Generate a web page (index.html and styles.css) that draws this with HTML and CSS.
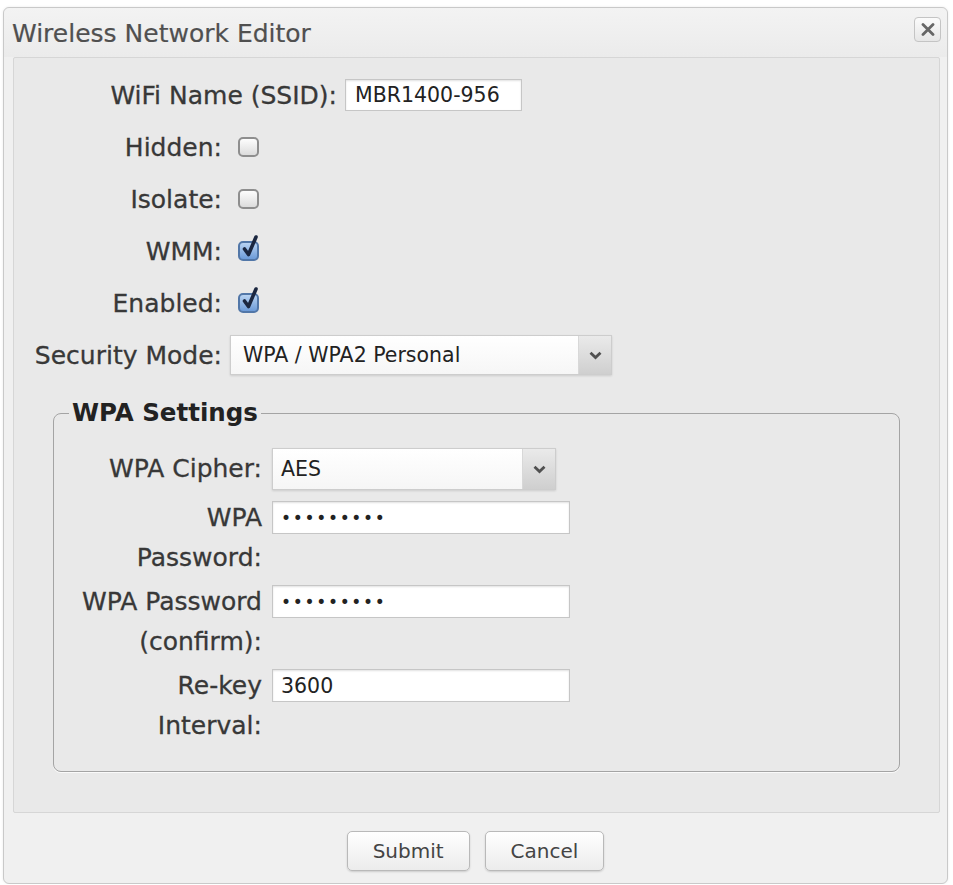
FILE: index.html
```html
<!DOCTYPE html>
<html lang="en">
<head>
<meta charset="utf-8">
<title>Wireless Network Editor</title>
<link rel="stylesheet" href="styles.css">
</head>
<body>
<div class="dialog">
  <div class="titlebar">
    <span class="title">Wireless Network Editor</span>
    <button class="close" aria-label="Close">
      <svg width="14" height="13" viewBox="0 0 14 13"><path d="M2 1.5 L12 11.5 M12 1.5 L2 11.5" stroke="#666" stroke-width="2.8" stroke-linecap="round" fill="none"/></svg>
    </button>
  </div>

  <div class="panel">
    <div class="row">
      <label class="lbl lbl-ssid">WiFi Name (SSID):</label>
      <input class="txt ssid" type="text" value="MBR1400-956">
    </div>
    <div class="row">
      <label class="lbl">Hidden:</label>
      <span class="cb"></span>
    </div>
    <div class="row">
      <label class="lbl">Isolate:</label>
      <span class="cb"></span>
    </div>
    <div class="row">
      <label class="lbl">WMM:</label>
      <span class="cb cb-on"><svg class="tick" width="20" height="26" viewBox="0 0 20 26"><path d="M4.5 15 L8.5 20.5 L16 3" stroke="#1b2740" stroke-width="3.6" stroke-linecap="round" stroke-linejoin="round" fill="none"/></svg></span>
    </div>
    <div class="row">
      <label class="lbl">Enabled:</label>
      <span class="cb cb-on"><svg class="tick" width="20" height="26" viewBox="0 0 20 26"><path d="M4.5 15 L8.5 20.5 L16 3" stroke="#1b2740" stroke-width="3.6" stroke-linecap="round" stroke-linejoin="round" fill="none"/></svg></span>
    </div>
    <div class="row">
      <label class="lbl">Security Mode:</label>
      <div class="sel sel-mode">
        <span class="sel-text">WPA / WPA2 Personal</span>
        <span class="sel-arrow"><svg width="13" height="9" viewBox="0 0 13 9"><path d="M1.5 1.8 L6.5 6.5 L11.5 1.8" stroke="#505050" stroke-width="2.8" fill="none"/></svg></span>
      </div>
    </div>

    <fieldset class="wpa">
      <legend>WPA Settings</legend>
      <div class="frow frow-cipher">
        <label class="flbl flbl-one">WPA Cipher:</label>
        <div class="sel sel-cipher">
          <span class="sel-text">AES</span>
          <span class="sel-arrow"><svg width="13" height="9" viewBox="0 0 13 9"><path d="M1.5 1.8 L6.5 6.5 L11.5 1.8" stroke="#505050" stroke-width="2.8" fill="none"/></svg></span>
        </div>
      </div>
      <div class="frow">
        <label class="flbl">WPA<br>Password:</label>
        <input class="txt ftxt pw" type="password" value="123456789">
      </div>
      <div class="frow">
        <label class="flbl">WPA Password<br>(confirm):</label>
        <input class="txt ftxt pw" type="password" value="123456789">
      </div>
      <div class="frow frow-last">
        <label class="flbl">Re-key<br>Interval:</label>
        <input class="txt ftxt" type="text" value="3600">
      </div>
    </fieldset>
  </div>

  <div class="footer">
    <button class="btn">Submit</button>
    <button class="btn">Cancel</button>
  </div>
</div>
</body>
</html>
```

FILE: styles.css
```css
html, body {
  margin: 0;
  padding: 0;
  background: #ffffff;
}

body {
  font-family: "DejaVu Sans", "Lucida Grande", sans-serif;
  color: #3a3a3a;
}

.dialog {
  box-sizing: border-box;
  width: 945px;
  margin: 7px 0 0 3px;
  border: 1px solid #c9c9c9;
  border-radius: 6px;
  background: #f0f0f0;
  box-shadow: 0 0 3px rgba(0, 0, 0, 0.08);
}

.titlebar {
  display: flex;
  justify-content: space-between;
  align-items: flex-start;
  height: 46px;
  padding: 3px 6px 0 8px;
  background: linear-gradient(#f3f3f3, #ebebeb);
  border-radius: 6px 6px 0 0;
}

.title {
  font-size: 25px;
  line-height: 46px;
  color: #505050;
  -webkit-text-stroke: 0.2px #505050;
}

.close {
  box-sizing: border-box;
  width: 27px;
  height: 25px;
  margin-top: 6px;
  padding: 0;
  display: flex;
  align-items: center;
  justify-content: center;
  border: 1px solid #c4c4c4;
  border-radius: 4px;
  background: linear-gradient(#fbfbfb, #e6e6e6);
}

.panel {
  margin: 0 7px 0 9px;
  padding-top: 11px;
  border: 1px solid #d6d6d6;
  border-radius: 2px;
  background: #e9e9e9;
}

.row {
  display: flex;
  align-items: center;
  height: 52px;
}

.lbl {
  width: 208px;
  text-align: right;
  font-size: 25px;
  color: #383838;
  -webkit-text-stroke: 0.3px #383838;
}

.lbl-ssid {
  width: 323px;
}

.txt {
  box-sizing: border-box;
  height: 33px;
  margin: 0 0 0 8px;
  padding: 0 8px;
  border: 1px solid #c6c6c6;
  background: #ffffff;
  box-shadow: inset 0 1px 2px rgba(0, 0, 0, 0.12);
  font-family: "DejaVu Sans", sans-serif;
  font-size: 20.5px;
  color: #222;
  outline: none;
}

.ssid {
  width: 177px;
  height: 32px;
  padding-left: 9px;
}

.pw {
  font-size: 17px;
  letter-spacing: 1.7px;
}

.cb {
  position: relative;
  box-sizing: border-box;
  width: 21px;
  height: 20px;
  margin-left: 16px;
  border: 2px solid #8e8e8e;
  border-radius: 5px;
  background: linear-gradient(#fdfdfd, #dcdcdc);
}

.cb-on {
  border-color: #5277a8;
  background: linear-gradient(#b8d3f2, #6c9bd8);
}

.tick {
  position: absolute;
  left: 0;
  top: -9px;
  overflow: visible;
}

.sel {
  box-sizing: border-box;
  display: flex;
  align-items: stretch;
  height: 40px;
  margin-left: 8px;
  border: 1px solid #cdcdcd;
  background: linear-gradient(#ffffff, #f6f6f6);
  box-shadow: 0 1px 2px rgba(0, 0, 0, 0.12);
}

.sel-mode {
  width: 382px;
}

.sel-text {
  flex: 1;
  display: flex;
  align-items: center;
  padding-left: 12px;
  font-size: 20.5px;
  color: #222;
}

.sel-arrow {
  width: 32px;
  display: flex;
  align-items: center;
  justify-content: center;
  border-left: 1px solid #d8d8d8;
  background: linear-gradient(#eaeaea, #cfcfcf);
}

.wpa {
  margin: 17px 39px 40px 39px;
  padding: 20px 0 25px 15px;
  border: 1px solid #a4a4a4;
  border-radius: 8px;
  box-shadow: 0 1px 0 #fafafa;
  min-width: 0;
}

.wpa legend {
  padding: 0 3px;
  font-size: 24.5px;
  font-weight: bold;
  line-height: 30px;
  color: #222;
}

.frow {
  display: flex;
  align-items: flex-start;
  margin-bottom: 4px;
}

.frow-cipher {
  align-items: center;
  margin-bottom: 8px;
}

.frow-last {
  margin-bottom: 0;
}

.flbl {
  width: 193px;
  text-align: right;
  font-size: 25px;
  line-height: 40px;
  color: #383838;
  -webkit-text-stroke: 0.3px #383838;
}

.flbl-one {
  line-height: 42px;
}

.sel-cipher {
  width: 284px;
  height: 42px;
  margin-left: 10px;
}

.sel-cipher .sel-text {
  padding-left: 8px;
}

.ftxt {
  width: 298px;
  margin: 3px 0 0 10px;
}

.footer {
  display: flex;
  justify-content: center;
  gap: 15px;
  height: 52px;
  padding-top: 18px;
}

.btn {
  box-sizing: border-box;
  height: 40px;
  padding: 0 25px;
  border: 1px solid #b9b9b9;
  border-radius: 5px;
  background: linear-gradient(#ffffff, #ececec);
  box-shadow: 0 1px 2px rgba(0, 0, 0, 0.15);
  font-family: "DejaVu Sans", sans-serif;
  font-size: 20px;
  color: #444;
}
```
